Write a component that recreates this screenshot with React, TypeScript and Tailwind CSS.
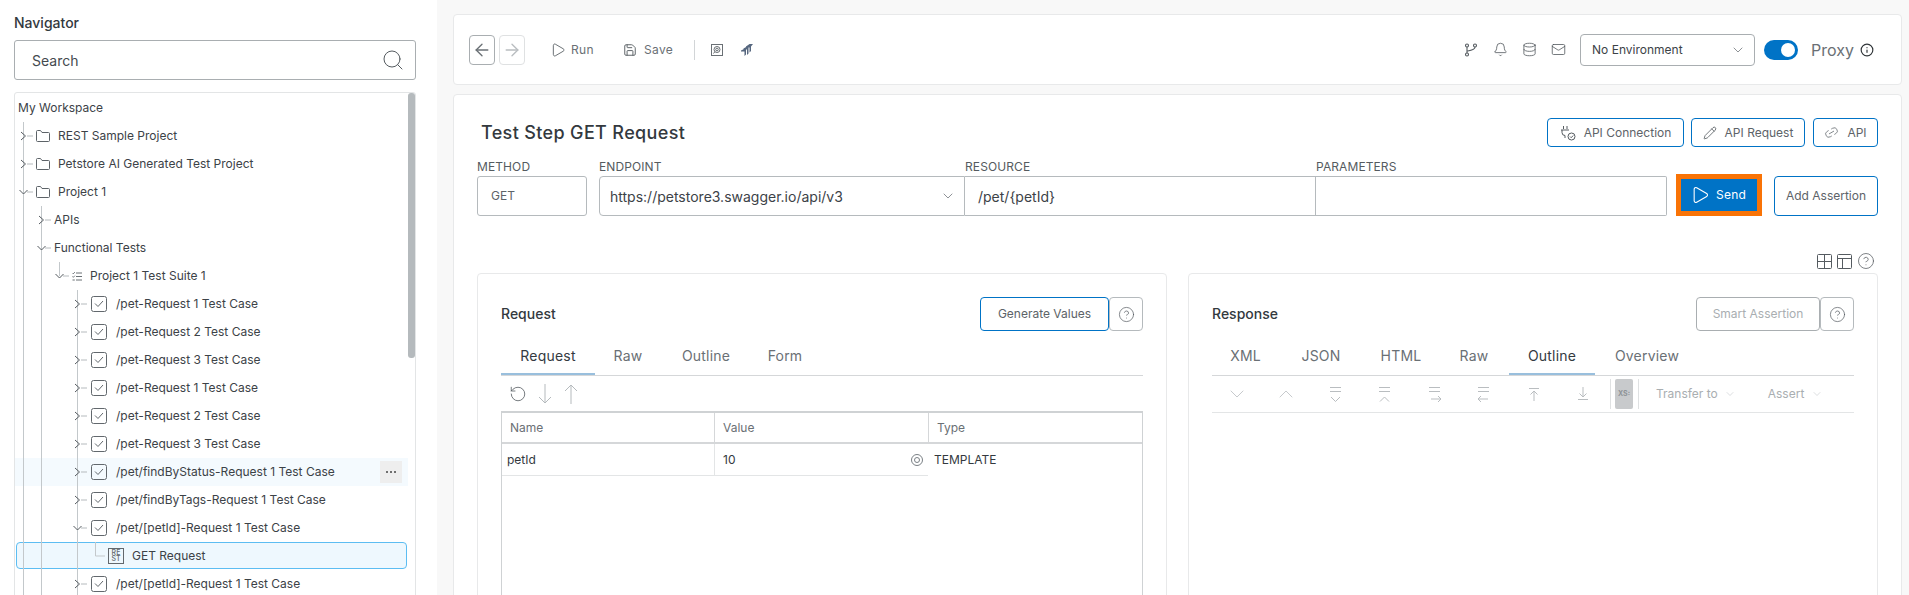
import { ArrowLeft, ArrowRight, Bell, ChevronDown, ChevronUp, CircleHelp, Database, Info, Link2, Mail, Pencil, Play, RotateCcw, Save, Search } from "lucide-react"

type Kind = "folder" | "suite" | "case" | "rest" | null

function Connector({ open, leaf, stop }: { open?: boolean; leaf?: boolean; stop?: boolean }) {
  return (
    <svg width="17" height="28" viewBox="0 0 17 28" fill="none" className="shrink-0 overflow-visible">
      <path d={stop ? "M4.5 0V14" : "M4.5 0V28"} stroke="#c3c8cb" />
      {leaf && <path d="M4.500 14H14" stroke="#c3c8cb" />}
      {!leaf && <path d="M8 14H14" stroke="#b5babd" />}
      {!leaf && (open
        ? <path d="M0.500 12L4.500 16L8.500 12" stroke="#555b60" />
        : <path d="M2 10L6.500 14L2 18" stroke="#555b60" />)}
    </svg>
  )
}

function NodeIcon({ kind }: { kind: Kind }) {
  if (kind === "folder") {
    return (
      <svg width="14" height="12" viewBox="0 0 14 12" fill="none" stroke="#5d6368" className="shrink-0">
        <path d="M0.500 10.500V1.500A1 1 0 0 1 1.500 0.500H4.500L6 2.500H12.500A1 1 0 0 1 13.500 3.500V10.500A1 1 0 0 1 12.500 11.500H1.500A1 1 0 0 1 0.500 10.500Z" />
      </svg>
    )
  }
  if (kind === "suite") {
    return (
      <svg width="10" height="9" viewBox="0 0 10 9" fill="none" stroke="#6a7075" className="shrink-0">
        <path d="M4 1H10M4 4.500H10M4 8H10M0.500 1L1.300 1.800L2.800 0.200M0.500 4.500L1.300 5.300L2.800 3.700M0.500 8H2.800" />
      </svg>
    )
  }
  if (kind === "case") {
    return (
      <svg width="16" height="16" viewBox="0 0 16 16" fill="none" stroke="#62686d" className="ml-px shrink-0">
        <rect x="0.500" y="0.500" width="15" height="15" rx="2" />
        <path d="M4 7.500L7 10.500L12 5" />
      </svg>
    )
  }
  if (kind === "rest") {
    return (
      <span className="flex h-4 w-4 shrink-0 flex-col items-center justify-center border border-[#62686d] text-[7px] font-medium leading-[6.500px] text-[#62686d]">
        <span>RE</span>
        <span>ST</span>
      </span>
    )
  }
  return null
}

function TreeRow({
  guides = [],
  label,
  kind = null,
  open,
  leaf,
  stop,
  hover,
  selected,
}: {
  guides?: boolean[]
  label: string
  kind?: Kind
  open?: boolean
  leaf?: boolean
  stop?: boolean
  hover?: boolean
  selected?: boolean
}) {
  return (
    <div className={`relative flex h-[28px] items-center pl-[4px] ${hover ? "bg-[#f4fafe]" : ""}`}>
      {selected && <div className="absolute inset-x-[1px] inset-y-0 h-[27px] rounded-[4px] border border-[#5cbdf2] bg-[#eef8fe]" />}
      {guides.map((g, i) => (
        <span key={i} className="relative h-full w-[18px] shrink-0">
          {g && <span className="absolute left-[4px] top-0 h-full w-px bg-[#c3c8cb]" />}
        </span>
      ))}
      <div className="relative flex items-center">
        <Connector open={open} leaf={leaf} stop={stop} />
        <NodeIcon kind={kind} />
        <span className={`${kind === null ? "" : kind === "case" ? "ml-[9px]" : "ml-[8px]"} whitespace-nowrap text-[12px] text-[#3c4247]`}>{label}</span>
      </div>
      {hover && (
        <span className="absolute right-[6px] top-[3px] flex h-[22px] w-[22px] items-center justify-center gap-[2px] bg-[#eeeeee]">
          <i className="h-[2px] w-[2px] rounded-full bg-[#444]" />
          <i className="h-[2px] w-[2px] rounded-full bg-[#444]" />
          <i className="h-[2px] w-[2px] rounded-full bg-[#444]" />
        </span>
      )}
    </div>
  )
}

function Navigator() {
  const g3 = [true, true, false]
  return (
    <aside className="flex w-[437px] shrink-0 flex-col bg-white pl-[14px] pr-[21px]">
      <div className="mt-[14px] shrink-0 text-[14px] font-medium leading-[18px] text-[#33393e]">Navigator</div>
      <div className="mt-[8px] flex h-[40px] shrink-0 items-center justify-between rounded-[3px] border border-[#a9aeb1] pl-[17px] pr-[10px]">
        <span className="text-[14px] text-[#444a4f]">Search</span>
        <Search size={24} strokeWidth={1} className="text-[#555b60]" />
      </div>
      <div className="mt-[12px] flex h-[600px] shrink-0 rounded-t-[3px] border border-[#e3e5e6]">
        <div className="min-w-0 flex-1 pt-px">
          <div className="flex h-[28px] items-center pl-[3px] text-[12px] text-[#3c4247]">My Workspace</div>
          <TreeRow label="REST Sample Project" kind="folder" />
          <TreeRow label="Petstore AI Generated Test Project" kind="folder" />
          <TreeRow label="Project 1" kind="folder" open />
          <TreeRow guides={[true]} label="APIs" />
          <TreeRow guides={[true]} label="Functional Tests" open />
          <TreeRow guides={[true, true]} label="Project 1 Test Suite 1" kind="suite" open stop />
          <TreeRow guides={g3} label="/pet-Request 1 Test Case" kind="case" />
          <TreeRow guides={g3} label="/pet-Request 2 Test Case" kind="case" />
          <TreeRow guides={g3} label="/pet-Request 3 Test Case" kind="case" />
          <TreeRow guides={g3} label="/pet-Request 1 Test Case" kind="case" />
          <TreeRow guides={g3} label="/pet-Request 2 Test Case" kind="case" />
          <TreeRow guides={g3} label="/pet-Request 3 Test Case" kind="case" />
          <TreeRow guides={g3} label="/pet/findByStatus-Request 1 Test Case" kind="case" hover />
          <TreeRow guides={g3} label="/pet/findByTags-Request 1 Test Case" kind="case" />
          <TreeRow guides={g3} label="/pet/[petId]-Request 1 Test Case" kind="case" open />
          <TreeRow guides={[true, true, false, true]} label="GET Request" kind="rest" leaf stop selected />
          <TreeRow guides={g3} label="/pet/[petId]-Request 1 Test Case" kind="case" />
        </div>
        <div className="w-[7px] shrink-0">
          <div className="h-[265px] rounded-[3px] bg-[#b5babd]" />
        </div>
      </div>
    </aside>
  )
}

function Toolbar() {
  return (
    <div className="flex h-[71px] items-center rounded-[4px] border border-[#e8e9ea] bg-white pl-[15px] pr-[27px]">
      <button className="flex h-[30px] w-[26px] items-center justify-center rounded-[4px] border border-[#a9aeb1] text-[#6a7075]">
        <ArrowLeft size={20} strokeWidth={1.600} />
      </button>
      <button className="ml-[4px] flex h-[30px] w-[26px] items-center justify-center rounded-[4px] border border-[#dfe1e2] text-[#b9bdc0]">
        <ArrowRight size={20} strokeWidth={1.600} />
      </button>
      <Play size={16} strokeWidth={1.300} className="ml-[25px] text-[#555b60]" />
      <span className="ml-[5px] text-[12px] tracking-[0.4px] text-[#6a7075]">Run</span>
      <Save size={14} strokeWidth={1.600} className="ml-[29px] text-[#555b60]" />
      <span className="ml-[7px] text-[12px] tracking-[0.3px] text-[#6a7075]">Save</span>
      <span className="ml-[21px] h-[20px] w-px bg-[#d2d5d7]" />
      <svg width="12" height="12" viewBox="0 0 12 12" fill="none" stroke="#6a7075" className="ml-[16px]">
        <rect x="0.500" y="0.500" width="11" height="11" />
        <circle cx="6" cy="5.500" r="3" />
        <circle cx="6" cy="5.500" r="1.300" />
        <path d="M3.800 7.800L2.500 9.500" />
      </svg>
      <svg width="12" height="12" viewBox="0 0 12 12" fill="#56677f" className="ml-[18px]">
        <path d="M5 2.500L8.500 0H12L10 2.500V7L8.500 8.500V3.500H5Z" />
        <path d="M2.500 4.500L6 2.500H7.500V9.500L6 11V5.500H2.500Z" />
        <path d="M0 6.500L3 5H5V10.500L3.500 12V7.500H0Z" />
      </svg>
      <div className="ml-auto flex items-center gap-[14px] text-[#555b60]">
        <svg width="16" height="16" viewBox="0 0 16 16" fill="none" stroke="currentColor" strokeWidth="1.100">
          <circle cx="4" cy="3.500" r="1.500" />
          <circle cx="12" cy="3.500" r="1.500" />
          <circle cx="4" cy="12.500" r="1.500" />
          <path d="M4 5V11M12 5C12 8 8 8.500 4.500 9" />
        </svg>
        <Bell size={15} strokeWidth={1.300} />
        <Database size={15} strokeWidth={1.300} />
        <Mail size={15} strokeWidth={1.300} />
      </div>
      <div className="ml-[14px] flex h-[32px] w-[175px] items-center justify-between rounded-[4px] border border-[#a9aeb1] pl-[11px] pr-[8px]">
        <span className="text-[12px] text-[#3c4247]">No Environment</span>
        <ChevronDown size={16} strokeWidth={1} className="text-[#555b60]" />
      </div>
      <span className="ml-[9px] flex h-[20px] w-[34px] items-center justify-end rounded-full bg-[#0073c6] pr-[3px]">
        <i className="h-[14px] w-[14px] rounded-full bg-white" />
      </span>
      <span className="ml-[13px] text-[16px] text-[#6a7075]">Proxy</span>
      <Info size={14} strokeWidth={2} className="ml-[6px] text-[#2f3438]" />
    </div>
  )
}

function OutlineButton({ children, className = "" }: { children: React.ReactNode; className?: string }) {
  return (
    <button className={`flex items-center justify-center rounded-[4px] border border-[#0073c6] text-[12px] text-[#5d6368] ${className}`}>
      {children}
    </button>
  )
}

function Field({ label, width, children, className = "" }: { label: string; width: string; children?: React.ReactNode; className?: string }) {
  return (
    <div className={`shrink-0 ${width}`}>
      <div className="mb-[1px] h-[17px] text-[12px] leading-[17px] tracking-[0.1px] text-[#555b60]">{label}</div>
      <div className={`flex h-[40px] items-center border border-[#b5babd] ${className}`}>{children}</div>
    </div>
  )
}

function HelpButton() {
  return (
    <button className="flex h-[34px] w-[34px] items-center justify-center rounded-[4px] border border-[#b5babd] text-[#555b60]">
      <CircleHelp size={17} strokeWidth={1} />
    </button>
  )
}

function Tab({ label, active, width }: { label: string; active?: boolean; width: string }) {
  return (
    <div className={`flex h-[38px] shrink-0 items-center justify-center border-b-2 text-[14px] tracking-[0.2px] ${width} ${active ? "border-[#99bfdd] text-[#343a3f]" : "border-transparent text-[#6a7075]"}`}>
      {label}
    </div>
  )
}

function StackIcon({ dir }: { dir: "down" | "up" | "right" | "left" }) {
  const arrow = {
    down: "M3 11L7.500 15.500L12 11",
    up: "M3 15.500L7.500 11L12 15.500",
    right: "M4 13H14M11 10L14 13L11 16",
    left: "M2 13H12M5 10L2 13L5 16",
  }[dir]
  return (
    <svg width="16" height="17" viewBox="0 0 16 17" fill="none" stroke="#b9bdc0" className="shrink-0">
      <path d="M2 1.500H13M2 5.500H13" />
      <path d={arrow} />
    </svg>
  )
}

function ToolSlot({ children }: { children: React.ReactNode }) {
  return <span className="flex w-[49.500px] shrink-0 justify-center">{children}</span>
}

function RequestPanel() {
  return (
    <section className="h-[400px] w-[690px] shrink-0 rounded-[4px] border border-[#e8e9ea] bg-white px-[23px] pt-[23px]">
      <div className="flex h-[34px] items-center">
        <span className="pb-[2px] text-[14px] font-medium text-[#33393e]">Request</span>
        <button className="ml-auto flex h-[34px] w-[129px] items-center justify-center rounded-[4px] border border-[#0073c6] text-[12px] text-[#5d6368]">
          Generate Values
        </button>
        <HelpButton />
      </div>
      <div className="mt-[6px] flex border-b border-[#d5d7d9]">
        <Tab label="Request" active width="w-[94px]" />
        <Tab label="Raw" width="w-[66px]" />
        <Tab label="Outline" width="w-[90px]" />
        <Tab label="Form" width="w-[68px]" />
      </div>
      <div className="flex h-[35px] items-center pl-[8px]">
        <RotateCcw size={18} strokeWidth={1} className="text-[#4a5055]" />
        <svg width="14" height="20" viewBox="0 0 14 20" fill="none" stroke="#b5babd" className="ml-[11px]">
          <path d="M7 0V19M1 13L7 19L13 13" />
        </svg>
        <svg width="14" height="20" viewBox="0 0 14 20" fill="none" stroke="#b5babd" className="ml-[12px]">
          <path d="M7 20V1M1 7L7 1L13 7" />
        </svg>
      </div>
      <div className="h-[300px] border-x border-t-2 border-[#cfd2d4] text-[12px]">
        <div className="grid h-[31px] grid-cols-[212px_214px_1fr] items-center border-b-2 border-[#d5d7d9] text-[#6a7075]">
          <span className="pl-[8px]">Name</span>
          <span className="flex h-full items-center border-l border-[#d5d7d9] pl-[8px]">Value</span>
          <span className="flex h-full items-center border-l border-[#d5d7d9] pl-[8px]">Type</span>
        </div>
        <div className="grid h-[32px] grid-cols-[212px_214px_1fr] items-center text-[#33393e]">
          <span className="flex h-full items-center border-b border-[#e3e5e6] pl-[5px]">petId</span>
          <span className="flex h-full items-center justify-between border-b border-l border-[#e3e5e6] pl-[8px] pr-[5px]">
            10
            <span className="flex h-[12px] w-[12px] items-center justify-center rounded-full border border-[#7a8085]">
              <i className="h-[6px] w-[6px] rounded-full border border-[#7a8085]" />
            </span>
          </span>
          <span className="flex h-full items-center pl-[6px]">TEMPLATE</span>
        </div>
      </div>
    </section>
  )
}

function ResponsePanel() {
  return (
    <section className="h-[400px] w-[690px] shrink-0 rounded-[4px] border border-[#e8e9ea] bg-white px-[23px] pt-[23px]">
      <div className="flex h-[34px] items-center">
        <span className="pb-[2px] text-[14px] font-medium text-[#33393e]">Response</span>
        <button className="ml-auto flex h-[34px] w-[124px] items-center justify-center rounded-[4px] border border-[#a9aeb1] text-[12px] text-[#a9aeb1]">
          Smart Assertion
        </button>
        <HelpButton />
      </div>
      <div className="mt-[6px] flex border-b border-[#d5d7d9]">
        <Tab label="XML" width="w-[67px]" />
        <Tab label="JSON" width="w-[84px]" />
        <Tab label="HTML" width="w-[76px]" />
        <Tab label="Raw" width="w-[70px]" />
        <Tab label="Outline" active width="w-[86px]" />
        <Tab label="Overview" width="w-[104px]" />
      </div>
      <div className="flex h-[37px] items-center border-b border-[#e3e5e6] text-[#b9bdc0]">
        <ToolSlot><ChevronDown size={24} strokeWidth={0.800} /></ToolSlot>
        <ToolSlot><ChevronUp size={24} strokeWidth={0.800} /></ToolSlot>
        <ToolSlot><StackIcon dir="down" /></ToolSlot>
        <ToolSlot><StackIcon dir="up" /></ToolSlot>
        <ToolSlot><StackIcon dir="right" /></ToolSlot>
        <ToolSlot><StackIcon dir="left" /></ToolSlot>
        <ToolSlot>
          <svg width="14" height="14" viewBox="0 0 14 14" fill="none" stroke="#b9bdc0" className="shrink-0">
            <path d="M2 1.500H12M7 14V4M3.500 7.500L7 4L10.500 7.500" />
          </svg>
        </ToolSlot>
        <ToolSlot>
          <svg width="14" height="14" viewBox="0 0 14 14" fill="none" stroke="#b9bdc0" className="shrink-0">
            <path d="M2 12.500H12M7 0V10M3.500 6.500L7 10L10.500 6.500" />
          </svg>
        </ToolSlot>
        <span className="ml-[2px] h-[30px] w-px bg-[#dfe1e2]" />
        <span className="ml-[4px] flex h-[30px] w-[18px] items-center justify-center rounded-[2px] bg-[#c8cacc] text-[7px] font-bold text-[#8e9397]">XS:</span>
        <span className="ml-[5px] h-[30px] w-px bg-[#dfe1e2]" />
        <span className="ml-[17px] whitespace-nowrap text-[12px] text-[#a9aeb1]">Transfer to</span>
        <ChevronDown size={12} strokeWidth={1} className="ml-[6px]" />
        <span className="ml-[32px] text-[12px] text-[#a9aeb1]">Assert</span>
        <ChevronDown size={12} strokeWidth={1} className="ml-[7px]" />
      </div>
    </section>
  )
}

export default function App() {
  return (
    <div className="flex h-[595px] w-full overflow-hidden bg-[#f8f8f8] font-['Inter',sans-serif]">
      <Navigator />
      <main className="min-w-0 flex-1 pl-[16px] pr-[7px] pt-[14px]">
        <Toolbar />
        <div className="mt-[9px] h-[600px] rounded-[4px] border border-[#e8e9ea] bg-white pl-[23px] pr-[23px]">
          <div className="flex h-[53px] items-end">
            <h1 className="mb-[2px] pl-[4px] text-[18px] font-medium leading-[26px] tracking-[0.35px] text-[#33393e]">Test Step GET Request</h1>
            <div className="ml-auto flex gap-[7px] pb-px">
              <OutlineButton className="h-[29px] w-[137px] gap-[8px]">
                <svg width="16" height="16" viewBox="0 0 16 16" fill="none" stroke="#555b60">
                  <path d="M3.500 1V4M7 1V4M1 5H9M2 5V7.500A3 3 0 0 0 5 10.500V13M11.500 15A3.500 3.500 0 1 0 11.500 8A3.500 3.500 0 0 0 11.500 15ZM10 11.500L11.200 12.700L13.200 10.500" />
                </svg>
                API Connection
              </OutlineButton>
              <OutlineButton className="h-[29px] w-[114px] gap-[8px]">
                <Pencil size={14} strokeWidth={1.400} className="text-[#555b60]" />
                API Request
              </OutlineButton>
              <OutlineButton className="ml-[1px] h-[29px] w-[65px] gap-[8px]">
                <Link2 size={15} strokeWidth={1.200} className="-rotate-[30deg] text-[#6a7075]" />
                API
              </OutlineButton>
            </div>
          </div>
          <div className="mt-[10px] flex items-end">
            <Field label="METHOD" width="w-[110px]" className="rounded-[3px] pl-[13px] text-[12px] text-[#5d6368]">GET</Field>
            <Field label="ENDPOINT" width="ml-[12px] w-[366px]" className="justify-between rounded-l-[4px] pl-[10px] pr-[8px] text-[14px] text-[#3c4247]">
              https://petstore3.swagger.io/api/v3
              <ChevronDown size={16} strokeWidth={1} className="text-[#555b60]" />
            </Field>
            <Field label="RESOURCE" width="w-[351px]" className="border-l-0 pl-[13px] text-[14px] text-[#3c4247]">/pet/{"{petId}"}</Field>
            <Field label="PARAMETERS" width="w-[351px]" className="rounded-r-[2px] border-l-0" />
            <button className="ml-[9px] flex h-[42px] w-[86px] items-center justify-center gap-[6px] border-[5px] border-[#f97306] bg-[#0073c6] pr-[2px] text-[12px] tracking-[0.2px] text-white">
              <Play size={20} strokeWidth={1.300} />
              Send
            </button>
            <OutlineButton className="ml-[12px] h-[40px] w-[104px]">Add Assertion</OutlineButton>
          </div>
          <div className="mt-[35px] flex h-[20px] items-center justify-end gap-[5px] pr-[3px] text-[#555b60]">
            <svg width="15" height="15" viewBox="0 0 15 15" fill="none" stroke="currentColor">
              <rect x="0.500" y="0.500" width="14" height="14" rx="1" />
              <path d="M7.500 0.500V14.500M0.500 7.500H14.500" />
            </svg>
            <svg width="15" height="15" viewBox="0 0 15 15" fill="none" stroke="currentColor">
              <rect x="0.500" y="0.500" width="14" height="14" rx="1" />
              <path d="M0.500 4.500H14.500M5.500 4.500V14.500" />
            </svg>
            <CircleHelp size={18} strokeWidth={1} />
          </div>
          <div className="mt-[2px] flex gap-[21px]">
            <RequestPanel />
            <ResponsePanel />
          </div>
        </div>
      </main>
    </div>
  )
}
